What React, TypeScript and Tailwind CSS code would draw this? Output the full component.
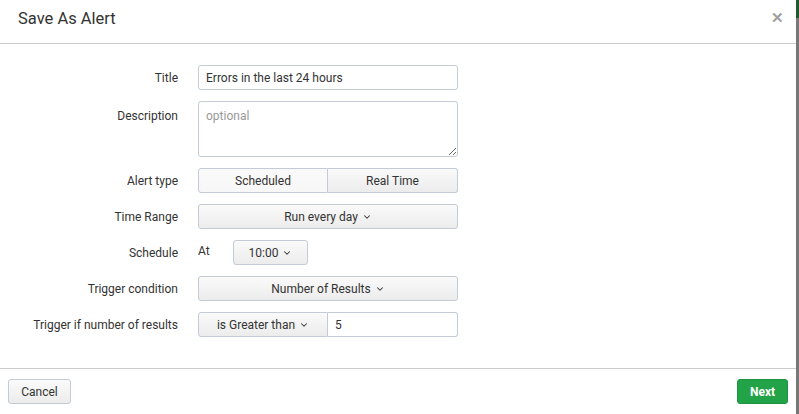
import { ChevronDown } from 'lucide-react'

const btn =
  'flex items-center justify-center gap-1 h-[25px] border border-[#c3cbd4] bg-gradient-to-b from-[#fafafa] to-[#ececec] text-[#333] text-[12px]'

function Label({ children }: { children: React.ReactNode }) {
  return <div className="w-[160px] shrink-0 text-right text-[12px] text-[#333]">{children}</div>
}

function Caret() {
  return <ChevronDown size={10} strokeWidth={2.5} className="text-[#333] mt-[1px]" />
}

export default function App() {
  return (
    <div className="flex w-[799px] h-[414px] bg-white" style={{ fontFamily: 'Roboto, "Liberation Sans", sans-serif' }}>
      <div className="flex flex-col w-[796px] h-full">
        {/* Header */}
        <div className="flex items-center justify-between h-[44px] px-[18px] border-b border-[#ccc]">
          <h1 className="text-[16.5px] text-[#333] leading-none mt-[-5px]">Save As Alert</h1>
          <span className="text-[#a0a0a0] text-[15px] font-bold leading-none mt-[-6px] mr-[-6px]">✕</span>
        </div>

        {/* Body */}
        <div className="flex-1 flex flex-col gap-[11px] pt-[21px] pl-[18px]">
          <div className="flex items-center gap-[20px]">
            <Label>Title</Label>
            <input
              readOnly
              value="Errors in the last 24 hours"
              className="w-[260px] h-[25px] border border-[#c3cbd4] rounded-[3px] px-[7px] text-[12px] text-[#333] outline-none"
            />
          </div>
          <div className="flex items-start gap-[20px]">
            <div className="pt-[6px]">
              <Label>Description</Label>
            </div>
            <textarea
              readOnly
              placeholder="optional"
              className="w-[260px] h-[56px] border border-[#c3cbd4] rounded-[3px] px-[7px] py-[5px] text-[12px] text-[#333] placeholder:text-[#999] outline-none"
            />
          </div>
          <div className="flex items-center gap-[20px]">
            <Label>Alert type</Label>
            <div className="flex w-[260px]">
              <div className={`${btn} w-[130px] rounded-l-[3px] from-[#f7f7f7] to-[#f7f7f7]`}>Scheduled</div>
              <div className={`${btn} w-[130px] rounded-r-[3px] border-l-0`}>Real Time</div>
            </div>
          </div>
          <div className="flex items-center gap-[20px]">
            <Label>Time Range</Label>
            <div className={`${btn} w-[260px] rounded-[3px]`}>
              Run every day <Caret />
            </div>
          </div>
          <div className="flex items-center gap-[20px]">
            <Label>Schedule</Label>
            <span className="text-[12px] text-[#333] w-[35px] -mt-[3px]">At</span>
            <div className={`${btn} w-[75px] rounded-[3px] -ml-[20px]`}>
              10:00 <Caret />
            </div>
          </div>
          <div className="flex items-center gap-[20px]">
            <Label>Trigger condition</Label>
            <div className={`${btn} w-[260px] rounded-[3px]`}>
              Number of Results <Caret />
            </div>
          </div>
          <div className="flex items-center gap-[20px]">
            <Label>Trigger if number of results</Label>
            <div className="flex w-[260px]">
              <div className={`${btn} w-[130px] rounded-l-[3px]`}>
                is Greater than <Caret />
              </div>
              <input
                readOnly
                value="5"
                className="w-[130px] h-[25px] border border-l-0 border-[#c3cbd4] rounded-r-[3px] px-[7px] text-[12px] text-[#333] outline-none"
              />
            </div>
          </div>
        </div>

        {/* Footer */}
        <div className="flex items-center justify-between h-[46px] px-[8px] border-t border-[#ccc] rounded-b-[5px]">
          <button className={`${btn} w-[63px] rounded-[3px]`}>Cancel</button>
          <button className="h-[25px] w-[51px] rounded-[3px] bg-[#22a347] border border-[#1c9440] text-white text-[12px] font-bold">
            Next
          </button>
        </div>
      </div>
      <div className="w-[3px] h-full flex flex-col">
        <div className="h-[18px] bg-[#1e5a2c]" />
        <div className="flex-1 bg-[#777]" />
      </div>
    </div>
  )
}
